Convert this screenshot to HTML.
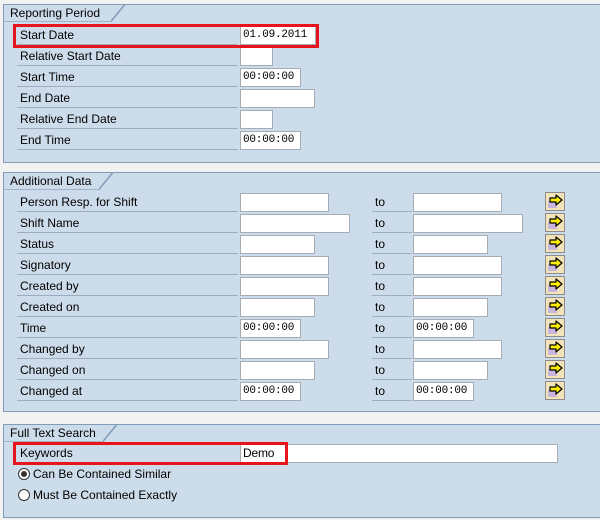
<!DOCTYPE html>
<html><head><meta charset="utf-8"><style>
body{margin:0;width:600px;height:520px;background:#f2f2f2;position:relative;overflow:hidden;font-family:"Liberation Sans",Arial,sans-serif;font-size:12px;color:#000}
.p{position:absolute;left:3px;width:600px;background:#cddcea;border:1px solid #7f9db9;border-right:none}
.h{position:absolute;left:0;top:0;height:16px;background:#cddcea;border-bottom:1px solid #9fb4c8;padding-left:6px;line-height:16px;font-size:12px}
.h:after{content:"";position:absolute;right:-14px;top:0;width:14px;height:17px;background:linear-gradient(to top left,transparent 48%,#7f9db9 49%,#7f9db9 55%,#cddcea 56%)}
.l{position:absolute;left:17px;width:221px;height:20px;line-height:20px;padding-left:3px;box-sizing:border-box;border-bottom:1px solid #9eadbb}
.t{position:absolute;left:372px;width:40px;height:20px;line-height:20px;padding-left:3px;box-sizing:border-box;border-bottom:1px solid #9eadbb}
.i{position:absolute;height:19px;box-sizing:border-box;background:#fff;border:1px solid #a5acb2;font-family:"Liberation Mono",monospace;font-size:11px;letter-spacing:-0.2px;line-height:17px;padding-left:2px;white-space:nowrap;overflow:hidden}
.b{position:absolute;left:545px;width:20px;height:19px;box-sizing:border-box;background:#f3e3b8;border:1px solid #8c8c8c}
.b:before{content:"";position:absolute;left:2px;top:8px;width:9px;height:7px;background:#c9b6dd}
.b svg{position:absolute;left:3px;top:1px}
.r{position:absolute;border:3px solid #e8141c;box-sizing:border-box}
.rad{position:absolute;left:18px;width:10px;height:10px;border:1px solid #333;border-radius:50%;background:#fff}
.rt{position:absolute;left:33px}
</style></head><body>
<svg width="0" height="0" style="position:absolute"><defs><symbol id="ar" viewBox="0 0 14 12"><path d="M1 4H7V1L13 6L7 11V8H1Z" fill="#ffee00" stroke="#000" stroke-width="1.2" stroke-linejoin="round"/></symbol></defs></svg>
<div class="p" style="top:4px;height:157px"><div class="h" style="width:101px">Reporting Period</div></div>
<div class="p" style="top:172px;height:238px"><div class="h" style="width:89px">Additional Data</div></div>
<div class="p" style="top:424px;height:92px"><div class="h" style="width:93px">Full Text Search</div></div>

<div class="l" style="top:25px">Start Date</div><div class="i" style="left:240px;top:26px;width:76px">01.09.2011</div>
<div class="l" style="top:46px">Relative Start Date</div><div class="i" style="left:240px;top:47px;width:33px"></div>
<div class="l" style="top:67px">Start Time</div><div class="i" style="left:240px;top:68px;width:61px">00:00:00</div>
<div class="l" style="top:88px">End Date</div><div class="i" style="left:240px;top:89px;width:75px"></div>
<div class="l" style="top:109px">Relative End Date</div><div class="i" style="left:240px;top:110px;width:33px"></div>
<div class="l" style="top:130px">End Time</div><div class="i" style="left:240px;top:131px;width:61px">00:00:00</div>
<div class="r" style="left:13px;top:24px;width:306px;height:24px"></div>

<div class="l" style="top:192px">Person Resp. for Shift</div><div class="i" style="left:240px;top:193px;width:89px"></div><div class="t" style="top:192px">to</div><div class="i" style="left:413px;top:193px;width:89px"></div><div class="b" style="top:192px"><svg width="14" height="12"><use href="#ar"/></svg></div>
<div class="l" style="top:213px">Shift Name</div><div class="i" style="left:240px;top:214px;width:110px"></div><div class="t" style="top:213px">to</div><div class="i" style="left:413px;top:214px;width:110px"></div><div class="b" style="top:213px"><svg width="14" height="12"><use href="#ar"/></svg></div>
<div class="l" style="top:234px">Status</div><div class="i" style="left:240px;top:235px;width:75px"></div><div class="t" style="top:234px">to</div><div class="i" style="left:413px;top:235px;width:75px"></div><div class="b" style="top:234px"><svg width="14" height="12"><use href="#ar"/></svg></div>
<div class="l" style="top:255px">Signatory</div><div class="i" style="left:240px;top:256px;width:89px"></div><div class="t" style="top:255px">to</div><div class="i" style="left:413px;top:256px;width:89px"></div><div class="b" style="top:255px"><svg width="14" height="12"><use href="#ar"/></svg></div>
<div class="l" style="top:276px">Created by</div><div class="i" style="left:240px;top:277px;width:89px"></div><div class="t" style="top:276px">to</div><div class="i" style="left:413px;top:277px;width:89px"></div><div class="b" style="top:276px"><svg width="14" height="12"><use href="#ar"/></svg></div>
<div class="l" style="top:297px">Created on</div><div class="i" style="left:240px;top:298px;width:75px"></div><div class="t" style="top:297px">to</div><div class="i" style="left:413px;top:298px;width:75px"></div><div class="b" style="top:297px"><svg width="14" height="12"><use href="#ar"/></svg></div>
<div class="l" style="top:318px">Time</div><div class="i" style="left:240px;top:319px;width:61px">00:00:00</div><div class="t" style="top:318px">to</div><div class="i" style="left:413px;top:319px;width:61px">00:00:00</div><div class="b" style="top:318px"><svg width="14" height="12"><use href="#ar"/></svg></div>
<div class="l" style="top:339px">Changed by</div><div class="i" style="left:240px;top:340px;width:89px"></div><div class="t" style="top:339px">to</div><div class="i" style="left:413px;top:340px;width:89px"></div><div class="b" style="top:339px"><svg width="14" height="12"><use href="#ar"/></svg></div>
<div class="l" style="top:360px">Changed on</div><div class="i" style="left:240px;top:361px;width:75px"></div><div class="t" style="top:360px">to</div><div class="i" style="left:413px;top:361px;width:75px"></div><div class="b" style="top:360px"><svg width="14" height="12"><use href="#ar"/></svg></div>
<div class="l" style="top:381px">Changed at</div><div class="i" style="left:240px;top:382px;width:61px">00:00:00</div><div class="t" style="top:381px">to</div><div class="i" style="left:413px;top:382px;width:61px">00:00:00</div><div class="b" style="top:381px"><svg width="14" height="12"><use href="#ar"/></svg></div>

<div class="l" style="top:443px">Keywords</div><div class="i" style="left:240px;top:444px;width:318px;font-family:'Liberation Sans',sans-serif;font-size:12px">Demo</div>
<div class="r" style="left:13px;top:442px;width:275px;height:23px"></div>
<div class="rad" style="top:468px"><div style="position:absolute;left:2px;top:2px;width:6px;height:6px;border-radius:50%;background:#333"></div></div><div class="rt" style="top:467px">Can Be Contained Similar</div>
<div class="rad" style="top:489px"></div><div class="rt" style="top:488px">Must Be Contained Exactly</div>
</body></html>
